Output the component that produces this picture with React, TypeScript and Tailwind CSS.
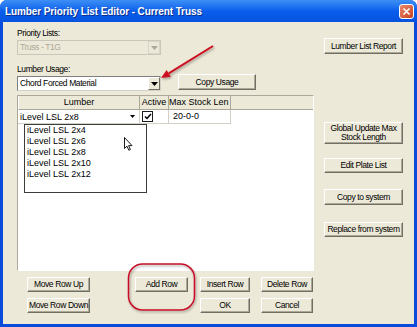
import React from "react";

const Btn = ({ children, className = "" }: { children: React.ReactNode; className?: string }) => (
  <div
    className={
      "flex items-center justify-center text-center bg-[#ECE9D8] border border-t-white border-l-white border-r-[#716F64] border-b-[#716F64] shadow-[inset_-1px_-1px_0_#ACA899] text-[8.5px] tracking-[-0.4px] leading-[9px] text-black " +
      className
    }
  >
    {children}
  </div>
);

const Caret = ({ color = "#000" }: { color?: string }) => (
  <svg width="7" height="4" viewBox="0 0 7 4">
    <path d="M0 0H7L3.5 4Z" fill={color} />
  </svg>
);

const Combo = ({ text, disabled = false }: { text: string; disabled?: boolean }) => (
  <div
    className={
      "flex items-center w-[144px] h-[15px] border " +
      (disabled
        ? "bg-[#ECE9D8] border-[#C9C7BA] text-[#ACA899]"
        : "bg-white border-t-[#7F7F7F] border-l-[#7F7F7F] border-r-[#D4D0C8] border-b-[#D4D0C8] text-black")
    }
  >
    <span className="flex-1 pl-[2px] text-[8.5px] tracking-[-0.4px] leading-[13px] truncate">{text}</span>
    <div
      className={
        "flex items-center justify-center w-[12px] h-[13px] bg-[#ECE9D8] border " +
        (disabled
          ? "border-[#D8D5C8]"
          : "border-t-white border-l-white border-r-[#716F64] border-b-[#716F64]")
      }
    >
      <Caret color={disabled ? "#ACA899" : "#000"} />
    </div>
  </div>
);

export default function App() {
  const items = ["iLevel LSL 2x4", "iLevel LSL 2x6", "iLevel LSL 2x8", "iLevel LSL 2x10", "iLevel LSL 2x12"];

  return (
    <div className="relative w-[417px] h-[327px] flex flex-col bg-[#0A4BDB] rounded-t-[7px] overflow-hidden font-['Liberation_Sans',Arial,sans-serif]">
      {/* title bar */}
      <div className="h-[22px] flex items-center pl-[5px] pr-[3px] bg-gradient-to-b from-[#3D8FF5] via-[#0A5EEC] to-[#0653DE]">
        <span className="flex-1 text-white font-bold text-[10px] tracking-[-0.1px] [text-shadow:1px_1px_0_#0A2F8C]">
          Lumber Priority List Editor - Current Truss
        </span>
        <div className="w-[15px] h-[15px] rounded-[3px] border border-white bg-gradient-to-br from-[#E9886A] to-[#C7401F] flex items-center justify-center">
          <svg width="9" height="9" viewBox="0 0 9 9">
            <path d="M1.5 1.5L7.5 7.5M7.5 1.5L1.5 7.5" stroke="white" strokeWidth="1.6" />
          </svg>
        </div>
      </div>

      {/* client */}
      <div className="flex-1 mx-[3px] mb-[3px] bg-[#ECE9D8] flex pl-[14px]">
        <div className="w-[297px] flex flex-col pt-[6px]">
          <div className="text-[8.5px] tracking-[-0.4px] leading-[10px] h-[10px] text-black">Priority Lists:</div>
          <div className="mt-[2px]">
            <Combo text="Truss - T1G" disabled />
          </div>
          <div className="mt-[9px] text-[8.5px] tracking-[-0.4px] leading-[10px] h-[10px] text-black">Lumber Usage:</div>
          <div className="flex items-start h-[17px]">
            <div className="mt-[2px]">
              <Combo text="Chord Forced Material" />
            </div>
            <Btn className="ml-[17px] w-[78px] h-[16px]">Copy Usage</Btn>
          </div>

          {/* grid */}
          <div className="relative mt-[4px] h-[176px] bg-white border border-t-[#ACA899] border-l-[#ACA899] border-r-white border-b-white text-[9px] leading-[12px] text-black">
            <div className="flex h-[14px] bg-[#ECE9D8]">
              <div className="w-[122px] text-center border-r border-b border-r-[#ACA899] border-b-[#ACA899] border-l border-l-white">Lumber</div>
              <div className="w-[29px] text-center border-r border-b border-[#ACA899]">Active</div>
              <div className="w-[62px] whitespace-nowrap overflow-hidden border-r border-b border-[#ACA899]">Max Stock Len</div>
              <div className="flex-1 border-b border-[#ACA899]" />
            </div>
            <div className="flex h-[14px]">
              <div className="w-[122px] flex items-center border-r border-b border-[#D4D0C8]">
                <span className="flex-1 pl-[2px]">iLevel LSL 2x8</span>
                <div className="w-[11px] h-[12px] flex items-center justify-center mr-[1px]">
                  <svg width="5" height="3" viewBox="0 0 5 3">
                    <path d="M0 0H5L2.5 3Z" fill="#000" />
                  </svg>
                </div>
              </div>
              <div className="w-[29px] flex items-center pl-[2px] border-r border-b border-[#D4D0C8]">
                <div className="w-[11px] h-[11px] bg-white border border-[#1C1C1C] border-t-[1.5px] border-l-[1.5px] flex items-center justify-center">
                  <svg width="8" height="7" viewBox="0 0 8 7">
                    <path d="M1 3.5L3 5.5L7 1" stroke="#000" strokeWidth="1.5" fill="none" />
                  </svg>
                </div>
              </div>
              <div className="w-[62px] pl-[4px] border-r border-b border-[#D4D0C8]">20-0-0</div>
            </div>

            {/* dropdown list */}
            <div className="absolute left-[6px] top-[28px] w-[123px] h-[69px] bg-white border border-[#3C3C3C]">
              {items.map((it) => (
                <div key={it} className="pl-[2px] leading-[11px]">
                  {it}
                </div>
              ))}
            </div>

            {/* mouse pointer */}
            <svg className="absolute left-[106px] top-[41px]" width="9" height="14" viewBox="0 0 9 14">
              <path d="M0.5 0.5V11.5L3 9.2L4.8 13.2L6.4 12.5L4.6 8.6H8Z" fill="white" stroke="#000" strokeWidth="0.9" />
            </svg>
          </div>

          {/* bottom buttons */}
          <div className="mt-[6px] ml-[10px] grid grid-cols-[108px_65px_61px_52px] grid-rows-[15px_15px] gap-y-[6px]">
            <Btn className="w-[63px] h-[15px]">Move Row Up</Btn>
            <Btn className="w-[53px] h-[15px]">Add Row</Btn>
            <Btn className="w-[50px] h-[15px]">Insert Row</Btn>
            <Btn className="w-[52px] h-[15px]">Delete Row</Btn>
            <Btn className="w-[63px] h-[15px]">Move Row Down</Btn>
            <div />
            <Btn className="w-[50px] h-[15px]">OK</Btn>
            <Btn className="w-[52px] h-[15px]">Cancel</Btn>
          </div>
        </div>

        {/* right buttons */}
        <div className="ml-[10px] w-[79px] flex flex-col pt-[16px]">
          <Btn className="h-[16px]">Lumber List Report</Btn>
          <Btn className="mt-[68px] h-[22px]">
            Global Update Max
            <br />
            Stock Length
          </Btn>
          <Btn className="mt-[14px] h-[15px]">Edit Plate List</Btn>
          <Btn className="mt-[16px] h-[16px]">Copy to system</Btn>
          <Btn className="mt-[17px] h-[15px]">Replace from system</Btn>
        </div>
      </div>

      {/* annotations */}
      <svg className="absolute inset-0 pointer-events-none" width="417" height="327" viewBox="0 0 417 327">
        <defs>
          <filter id="sh" x="-20%" y="-20%" width="140%" height="140%">
            <feDropShadow dx="1" dy="1.5" stdDeviation="1" floodColor="#000" floodOpacity="0.35" />
          </filter>
        </defs>
        <g filter="url(#sh)">
          <line x1="213" y1="46" x2="168.7" y2="73.3" stroke="#CC1020" strokeWidth="2" />
          <polygon points="161,78 170.8,76.7 166.6,69.9" fill="#CC1020" />
          <rect x="128.5" y="264" width="66" height="46" rx="14" fill="none" stroke="#C8102A" strokeWidth="1.5" />
        </g>
      </svg>
    </div>
  );
}
